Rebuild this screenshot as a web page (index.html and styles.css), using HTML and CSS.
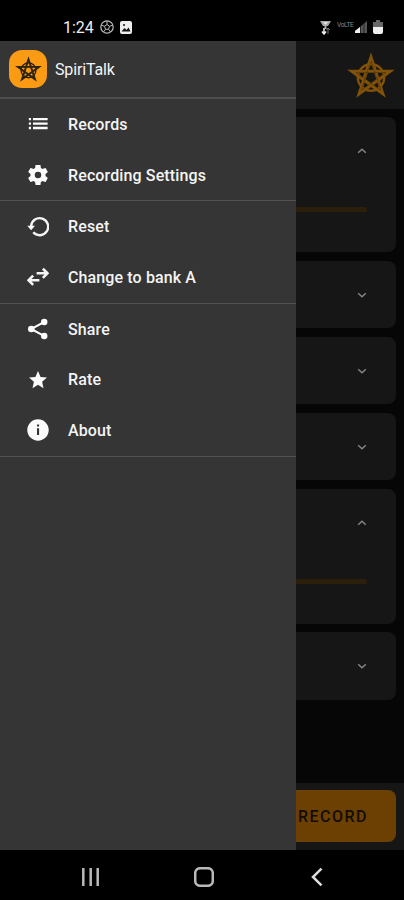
FILE: index.html
```
<!DOCTYPE html>
<html lang="en">
<head>
<meta charset="utf-8">
<meta name="viewport" content="width=device-width">
<title>SpiriTalk</title>
<link rel="stylesheet" href="styles.css">
</head>
<body>
<svg class="defs" aria-hidden="true">
  <symbol id="pentagram" viewBox="0 0 48 48">
    <circle cx="24" cy="25.500" r="13.200" fill="none" stroke="currentColor" stroke-width="2.4"/>
    <path d="M24 5.700 35.600 41.500 5.200 19.400H42.800L12.400 41.500Z" fill="none" stroke="currentColor" stroke-width="3.3" stroke-miterlimit="8"/>
    <path class="groove" d="M24 9 34 38.500 9 20.500H39L14 38.500Z" fill="none" stroke-width=".6"/>
  </symbol>
  <symbol id="up" viewBox="0 0 10 6"><path d="M1.2 4.8 5 1.3 8.8 4.8" fill="none" stroke="currentColor" stroke-width="1.5"/></symbol>
  <symbol id="down" viewBox="0 0 10 6"><path d="M1.2 1.2 5 4.7 8.8 1.2" fill="none" stroke="currentColor" stroke-width="1.5"/></symbol>
</svg>
<div class="phone">
  <header class="status">
    <div class="status-left">
      <span class="time">1:24</span>
      <svg class="ball" viewBox="0 0 14 14" fill="none" stroke="#bbb"><circle cx="7" cy="7" r="6.2" stroke-width="1.2"/><path d="M7 4.500 9.500 6.300 8.500 9.300H5.500L4.500 6.300ZM7 4.500V1M9.500 6.300 13 5M8.500 9.300 10.500 12M5.500 9.300 3.500 12M4.500 6.300 1 5" stroke-width="1"/></svg>
      <svg class="photo" viewBox="0 0 12 13"><rect width="12" height="13" rx="2" fill="#eee"/><path d="M1.5 10.5 4.5 7 6.5 9 8.5 6.5 10.5 10.5Z" fill="#111"/><circle cx="4" cy="4" r="1" fill="#111"/></svg>
    </div>
    <div class="status-right">
      <svg class="alarm" viewBox="0 0 11 15"><path d="M0 1H11L8 6H3Z" fill="#aaa"/><path d="M3 2.2H8L5.5 4.5Z" fill="#eee"/><path d="M5.5 6V9" stroke="#aaa" stroke-width="2"/><path d="M4 8V14M2 11.500 4 14 6 11.500" stroke="#eee" stroke-width="1.5" fill="none"/><path d="M8 14V8M6.500 10 8 8 10 10" stroke="#777" fill="none"/></svg>
      <span class="net">VoLTE</span>
      <svg class="signal" viewBox="0 0 12 12"><path d="M0 12V10L12 0V12Z" fill="#555"/><path d="M0 12V10L5 6V12Z" fill="#eee"/><path d="M5.500 5V12M9 2V12" stroke="#111" stroke-width=".7"/></svg>
      <svg class="battery" viewBox="0 0 10 14"><path d="M3 0H7V2H10V7H0V2H3Z" fill="#666"/><path d="M0 7H10V12Q10 14 8 14H2Q0 14 0 12Z" fill="#eee"/></svg>
    </div>
  </header>
  <main class="screen">
    <div class="app">
      <div class="toolbar"><svg class="mark"><use href="#pentagram"/></svg></div>
      <div class="cards">
        <section class="card open"><svg class="chev"><use href="#up"/></svg><div class="slider"></div></section>
        <section class="card"><svg class="chev"><use href="#down"/></svg></section>
        <section class="card"><svg class="chev"><use href="#down"/></svg></section>
        <section class="card"><svg class="chev"><use href="#down"/></svg></section>
        <section class="card open"><svg class="chev"><use href="#up"/></svg><div class="slider"></div></section>
        <section class="card"><svg class="chev"><use href="#down"/></svg></section>
      </div>
      <div class="footer"><button class="record">RECORD</button></div>
    </div>
    <aside class="drawer">
      <div class="brand">
        <span class="logo"><svg><use href="#pentagram"/></svg></span>
        <span class="name">SpiriTalk</span>
      </div>
      <nav>
        <div class="group">
          <a class="item"><svg viewBox="0 0 24 24"><path d="M2 5.500h2.400v2.500H2zM2 10.300h2.400v2.500H2zM2 15.100h2.400v2.500H2zM6.500 5.500H22.500v2.500H6.500zM6.500 10.300H22.500v2.500H6.500zM6.500 15.100H22.500v2.500H6.500z"/></svg><span>Records</span></a>
          <a class="item"><svg viewBox="1.500 1.500 21 21"><path d="M19.140 12.940c.04-.3.060-.61.060-.94 0-.32-.02-.64-.07-.94l2.030-1.580c.18-.14.230-.41.120-.61l-1.920-3.320c-.12-.22-.37-.29-.59-.22l-2.390.96c-.5-.38-1.030-.7-1.620-.94l-.36-2.540c-.04-.24-.24-.41-.48-.41h-3.840c-.24 0-.43.170-.47.410l-.36 2.540c-.59.240-1.130.570-1.620.940l-2.390-.96c-.22-.08-.47 0-.59.220L2.740 8.870c-.12.210-.08.470.120.610l2.030 1.580c-.05.300-.09.630-.09.940s.02.640.070.940l-2.030 1.580c-.18.140-.23.410-.12.610l1.920 3.320c.12.220.370.290.590.220l2.390-.96c.5.380 1.030.7 1.620.94l.36 2.540c.05.240.240.410.480.410h3.840c.24 0 .44-.17.470-.41l.36-2.540c.59-.24 1.130-.56 1.620-.94l2.390.96c.22.080.470 0 .59-.22l1.920-3.320c.12-.22.070-.47-.12-.61zM12 15.100A3.100 3.100 0 1 1 12 8.900a3.100 3.100 0 0 1 0 6.200z"/></svg><span>Recording Settings</span></a>
        </div>
        <div class="group">
          <a class="item"><svg viewBox="0 0 24 24"><path d="M4.500 11A9.300 9.300 0 1 1 6.800 17.800" fill="none" stroke="#f4f4f4" stroke-width="2.600"/><path d="M.3 10.500H8.700L4.500 15.500Z"/></svg><span>Reset</span></a>
          <a class="item"><svg viewBox="0 0 24 24" class="line"><path d="M10.500 8H22M17.300 3 22.300 8 17.300 13M13.500 15.500H2M6.700 10.500 1.700 15.500 6.700 20.500"/></svg><span>Change to bank A</span></a>
        </div>
        <div class="group">
          <a class="item"><svg viewBox="0 0 24 24"><path d="M19 4.300 4.500 12 19 19.700" fill="none" stroke="#fff" stroke-width="2.200"/><circle cx="18.800" cy="4.300" r="3.500"/><circle cx="4.700" cy="12" r="3.600"/><circle cx="18.800" cy="19.700" r="3.500"/></svg><span>Share</span></a>
          <a class="item"><svg viewBox="0 0 24 24"><path d="M12 2.200 14.800 8.800 21.800 9.400 16.500 14 18 21 12 17.300 6 21 7.500 14 2.200 9.400 9.200 8.800Z"/></svg><span>Rate</span></a>
          <a class="item"><svg viewBox="0 0 24 24"><path fill-rule="evenodd" d="M12 0.300a11.700 11.700 0 1 0 0 23.400a11.700 11.700 0 1 0 0-23.400zM10.900 6h2.300v2.300h-2.300zM10.900 10.200h2.300v7.300h-2.300z"/></svg><span>About</span></a>
        </div>
      </nav>
    </aside>
  </main>
  <footer class="navbar">
    <svg viewBox="0 0 20 20"><path d="M2.300 1V19M9.700 1V19M16.700 1V19"/></svg>
    <svg viewBox="0 0 20 20"><rect x="1.200" y="1.200" width="17.600" height="17.600" rx="5"/></svg>
    <svg viewBox="0 0 20 20"><path d="M14.500 1.700 6 10 14.500 18.300"/></svg>
  </footer>
</div>
</body>
</html>
```
FILE: styles.css
```
* { box-sizing: border-box; }
body { margin: 0; background: #000; font-family: Roboto, sans-serif; color: #f4f4f4; }
svg { display: block; flex: none; }
.defs { position: absolute; width: 0; height: 0; }
.phone { width: 404px; height: 900px; display: flex; flex-direction: column; overflow: hidden; }

.status { height: 41px; flex: none; display: flex; justify-content: space-between; padding: 17px 21px 0 63px; }
.status-left, .status-right { display: flex; align-items: center; height: 20px; }
.time { font-size: 16px; font-weight: 400; width: 37px; color: #eee; }
.ball { width: 14px; height: 14px; }
.photo { width: 12px; height: 13px; margin-left: 6px; }
.alarm { width: 11px; height: 15px; }
.net { width: 17px; margin: -5px 1px 0 6px; font-size: 6.5px; line-height: 8px; color: #888; letter-spacing: -0.3px; }
.signal { width: 12px; height: 12px; }
.battery { width: 10px; height: 14px; margin-left: 6px; }

.screen { height: 809px; flex: none; display: grid; grid-template-columns: 404px; }
.app, .drawer { grid-area: 1 / 1; }
.app { display: flex; flex-direction: column; background: #060606; }
.toolbar { height: 68px; background: #161616; display: flex; justify-content: flex-end; padding: 11px 9px 0 0; }
.mark { width: 48px; height: 48px; color: #825208; }
.groove { stroke: #4a300b; }
.cards { flex: 1; display: flex; flex-direction: column; gap: 8.6px; padding: 8px 8px 0; }
.card { height: 67.3px; flex: none; border-radius: 8px; background: #161616; padding: 31px 29px 0; display: flex; flex-direction: column; align-items: flex-end; }
.card.open { height: 135.3px; }
.chev { width: 10px; height: 6px; color: #858585; }
.slider { width: 100%; height: 5px; margin-top: 53px; border-radius: 3px; background: #2b1f0c; }
.footer { height: 67px; background: #161616; padding: 7px 8px 8px; }
.record { display: block; width: 100%; height: 52px; border: 0; border-radius: 8px; background: #6b4002; color: #120d06; font: 500 16px Roboto, sans-serif; letter-spacing: 1.5px; text-align: right; padding: 0 28px 0 0; }

.drawer { width: 295.5px; background: #353535; z-index: 1; }
.brand { height: 58px; display: flex; align-items: center; padding: 0 9px; gap: 8px; border-bottom: 2px solid #4e4e4e; }
.logo { width: 38px; height: 38px; border-radius: 13px; background: #fb9b13; display: grid; place-items: center; color: #29200f; }
.logo svg { width: 27px; height: 27px; }
.logo .groove { stroke: none; }
.name { font-size: 16px; letter-spacing: -0.15px; }
.group { border-bottom: 1px solid #525252; }
.item { height: 50.7px; display: flex; align-items: center; gap: 19px; padding-left: 27px; font-size: 16px; font-weight: 500; letter-spacing: 0.12px; }
.item svg { width: 22px; height: 22px; fill: #fbfbfb; }
.item svg.line path { fill: none; stroke: #f4f4f4; stroke-width: 2.8; }

.navbar { height: 50px; display: flex; gap: 93px; padding: 17px 0 0 81px; }
.navbar svg { width: 20px; height: 20px; fill: none; stroke: #b9b9b9; stroke-width: 2.5; }
.navbar svg:last-child { stroke: #ddd; }
```
